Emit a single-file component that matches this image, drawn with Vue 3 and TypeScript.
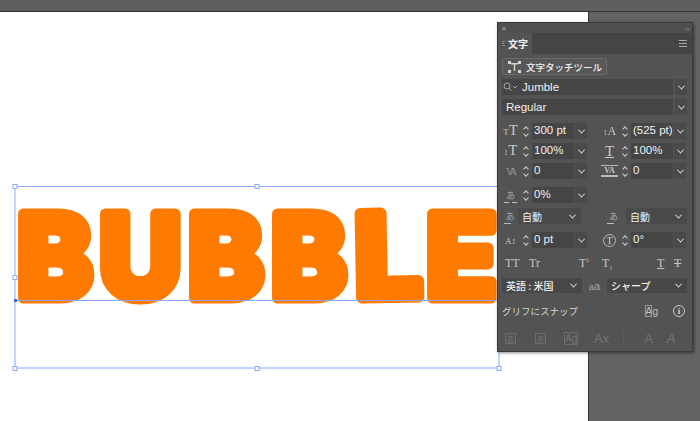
<script setup lang="ts">
const letters = [
  { ch: 'B', x: 17, sx: 0.98, rot: 0 },
  { ch: 'U', x: 99, sx: 0.98, rot: 0 },
  { ch: 'B', x: 188, sx: 0.98, rot: 0 },
  { ch: 'B', x: 271, sx: 0.98, rot: 0 },
  { ch: 'L', x: 355, sx: 1.03, rot: -1 },
  { ch: 'E', x: 426, sx: 1, rot: 0 },
]
const handles = [
  [15, 186], [15, 277], [15, 368], [257, 186], [257, 368], [499, 368],
]
</script>

<template>
  <div class="screen">
    <div class="topbar"></div>
    <div class="workspace">
      <div class="artboard">
        <svg class="art" viewBox="0 12 588 409" width="588" height="409">
          <g fill="#ff7a00" stroke="#ff7a00" stroke-width="11" stroke-linejoin="round">
            <text
              v-for="(l, i) in letters"
              :key="i"
              class="bubble"
              :transform="`translate(${l.x} 298) rotate(${l.rot}) scale(${l.sx} 1)`"
            >{{ l.ch }}</text>
          </g>
          <g fill="none" stroke="#8ba6ff" stroke-width="1">
            <rect x="15" y="186.5" width="484" height="181.5" />
            <line x1="15" y1="300.500" x2="499" y2="300.500" />
          </g>
          <rect x="14" y="299" width="3" height="3" fill="#3d5fe0" />
          <rect
            v-for="(h, i) in handles"
            :key="i"
            :x="h[0] - 2"
            :y="h[1] - 1.5"
            width="4"
            height="4"
            fill="#fff"
            stroke="#8ba6ff"
          />
        </svg>
      </div>
    </div>

    <div class="panel">
      <div class="titlebar">
        <span class="x">✕</span>
        <span class="collapse">››</span>
      </div>
      <div class="tabs">
        <div class="tab"><i class="grip"></i>文字</div>
        <div class="burger"><i></i><i></i><i></i></div>
      </div>

      <div class="body">
        <button class="touch">
          <svg width="13" height="12" viewBox="0 0 13 12">
            <g fill="#d6d6d6">
              <rect x="0" y="0" width="3" height="3" />
              <rect x="10" y="0" width="3" height="3" />
              <rect x="0" y="9" width="3" height="3" />
              <rect x="10" y="9" width="3" height="3" />
              <path d="M3 2h7v1.500H7.200V10H5.800V3.500H3z" />
            </g>
          </svg>
          文字タッチツール
        </button>

        <div class="wide">
          <div class="field grow">
            <svg class="search" width="15" height="10" viewBox="0 0 15 10">
              <g fill="none" stroke="#a8a8a8">
                <circle cx="4" cy="4" r="3" />
                <path d="M6 6l2.500 3M10 4l2 2 2-2" />
              </g>
            </svg>
            Jumble
          </div>
          <div class="drop"><i class="chev"></i></div>
        </div>
        <div class="wide">
          <div class="field grow pad">Regular</div>
          <div class="drop"><i class="chev"></i></div>
        </div>

        <div class="grid first">
          <div class="ctl">
            <span class="ico serif big"><small>T</small>T</span>
            <span class="spin"><i></i><i></i></span>
            <span class="val">300 pt</span><span class="dd"><i class="chev"></i></span>
          </div>
          <div class="ctl">
            <span class="ico serif stack"><small>↕</small>A</span>
            <span class="spin"><i></i><i></i></span>
            <span class="val">(525 pt)</span><span class="dd"><i class="chev"></i></span>
          </div>
          <div class="ctl">
            <span class="ico serif big"><small>↕</small>T</span>
            <span class="spin"><i></i><i></i></span>
            <span class="val">100%</span><span class="dd"><i class="chev"></i></span>
          </div>
          <div class="ctl">
            <span class="ico serif big under">T</span>
            <span class="spin"><i></i><i></i></span>
            <span class="val">100%</span><span class="dd"><i class="chev"></i></span>
          </div>
          <div class="ctl">
            <span class="ico serif va dim">VA</span>
            <span class="spin"><i></i><i></i></span>
            <span class="val">0</span><span class="dd"><i class="chev"></i></span>
          </div>
          <div class="ctl">
            <span class="ico serif va boxed">VA</span>
            <span class="spin"><i></i><i></i></span>
            <span class="val">0</span><span class="dd"><i class="chev"></i></span>
          </div>
        </div>

        <div class="grid tsume">
          <div class="ctl">
            <span class="ico kana">あ
              <svg class="arrow" width="13" height="3" viewBox="0 0 13 3"><path d="M0 1.500h5M8 1.500h5" stroke="#bbb" /></svg>
            </span>
            <span class="spin"><i></i><i></i></span>
            <span class="val">0%</span><span class="dd"><i class="chev"></i></span>
          </div>
        </div>

        <div class="grid auto">
          <div class="sel left">
            <span class="ico kana">あ
              <svg class="arrow" width="11" height="3" viewBox="0 0 11 3"><path d="M0 1.500h7" stroke="#bbb" /></svg>
            </span>
            <span class="auto-box">自動<i class="chev"></i></span>
          </div>
          <div class="sel right">
            <span class="ico kana">あ
              <svg class="arrow" width="11" height="3" viewBox="0 0 11 3"><path d="M4 1.500h7" stroke="#bbb" /></svg>
            </span>
            <span class="auto-box">自動<i class="chev"></i></span>
          </div>
        </div>

        <div class="grid shift">
          <div class="ctl">
            <span class="ico serif big shift-ico"><small class="dim-s">A</small><small>↕</small></span>
            <span class="spin"><i></i><i></i></span>
            <span class="val">0 pt</span><span class="dd"><i class="chev"></i></span>
          </div>
          <div class="ctl">
            <span class="ico serif ring">T</span>
            <span class="spin"><i></i><i></i></span>
            <span class="val">0°</span><span class="dd"><i class="chev"></i></span>
          </div>
        </div>

        <div class="caps serif">
          <span>TT</span>
          <span>Tr</span>
          <span>T<sup>1</sup></span>
          <span>T<sub>1</sub></span>
          <span class="ul">T</span>
          <span class="st">T</span>
        </div>

        <div class="lang">
          <span class="lang-box">英語 : 米国<i class="chev"></i></span>
          <span class="aa">a<small>a</small></span>
          <span class="lang-box">シャープ<i class="chev"></i></span>
        </div>

        <div class="snap">
          <span class="snap-label">グリフにスナップ</span>
          <span class="ag"><b>A</b>g</span>
          <span class="info">i</span>
        </div>

        <div class="disabled">
          <span class="d-box b1">あ</span>
          <span class="d-box b2">あ</span>
          <span class="d-box b3">Ag</span>
          <span class="d-plain p1">Ax</span>
          <span class="sep"></span>
          <span class="d-plain p2">A</span>
          <span class="d-plain p3">A</span>
        </div>
      </div>
    </div>
  </div>
</template>

<style scoped>
.screen {
  position: relative;
  width: 700px;
  height: 421px;
  overflow: hidden;
  background: #636363;
  font-family: "Noto Sans CJK JP", "Liberation Sans", sans-serif;
}
.topbar {
  height: 11px;
  background: #5f5f5f;
  border-bottom: 1px solid #333;
}
.workspace {
  display: flex;
  height: 409px;
}
.artboard {
  width: 588px;
  height: 409px;
  background: #fff;
  border-right: 1px solid #333;
}
.art {
  display: block;
}
.bubble {
  font-family: Inter, "Liberation Sans", sans-serif;
  font-weight: 800;
  font-size: 116px;
}

.panel {
  position: absolute;
  left: 497px;
  top: 22px;
  width: 196px;
  height: 330px;
  background: #535353;
  border: 1px solid #3a3a3a;
  box-sizing: border-box;
  box-shadow: 1px 1px 3px rgba(0, 0, 0, 0.45);
  color: #f0f0f0;
  font-size: 11px;
}
.titlebar {
  height: 10px;
  display: flex;
  justify-content: space-between;
  align-items: center;
  padding: 0 3px;
  background: #4f4f4f;
  color: #a5a5a5;
  font-size: 7px;
  line-height: 10px;
}
.tabs {
  display: flex;
  justify-content: space-between;
  height: 21px;
  background: #454545;
}
.tab {
  width: 34px;
  display: flex;
  align-items: center;
  gap: 4px;
  padding-left: 4px;
  box-sizing: border-box;
  background: #535353;
  font-size: 10px;
  font-weight: 700;
}
.grip {
  width: 2px;
  height: 5px;
  border: 1px dotted #888;
  box-sizing: border-box;
}
.burger {
  display: flex;
  flex-direction: column;
  justify-content: center;
  gap: 2px;
  padding-right: 5px;
}
.burger i {
  display: block;
  width: 8px;
  height: 1px;
  background: #aaa;
}
.body {
  padding: 4px 5px 0 4px;
}
.touch {
  display: flex;
  align-items: center;
  gap: 5px;
  width: 105px;
  height: 17px;
  padding: 0 0 0 5px;
  margin: 0;
  background: #585858;
  border: 1px solid #6b6b6b;
  border-radius: 2px;
  color: #f0f0f0;
  font: inherit;
  font-size: 9.500px;
  font-weight: 500;
  white-space: nowrap;
  box-sizing: border-box;
}
.wide {
  display: flex;
  gap: 2px;
  height: 16px;
  margin-top: 4px;
}
.field {
  display: flex;
  align-items: center;
  background: #454545;
  font-family: "Liberation Sans", sans-serif;
  font-size: 11.500px;
}
.grow {
  flex: 1;
}
.pad {
  padding-left: 4px;
}
.search {
  margin: 0 4px 0 1px;
}
.drop {
  width: 12px;
  display: flex;
  align-items: center;
  justify-content: center;
  background: #4a4a4a;
}
.chev {
  display: inline-block;
  width: 4px;
  height: 4px;
  border-right: 1px solid #ddd;
  border-bottom: 1px solid #ddd;
  transform: rotate(45deg) translate(-1px, -1px);
}
.grid {
  display: grid;
  grid-template-columns: 99px 86px;
}
.first {
  margin-top: 8px;
  row-gap: 4px;
}
.tsume {
  margin-top: 8px;
}
.auto {
  margin-top: 5px;
}
.shift {
  margin-top: 8px;
}
.ctl {
  display: flex;
  align-items: center;
  height: 16px;
}
.ico {
  position: relative;
  width: 17px;
  flex: none;
  text-align: center;
  color: #c8c8c8;
  white-space: nowrap;
}
.serif {
  font-family: "Liberation Serif", serif;
}
.big {
  font-size: 15px;
  line-height: 16px;
}
.big small {
  font-size: 9px;
}
.stack {
  font-size: 12px;
}
.stack small {
  font-size: 9px;
}
.under {
  text-decoration: underline;
  text-underline-offset: 1px;
}
.va {
  font-size: 10px;
  letter-spacing: -2px;
}
.dim {
  color: #9a9a9a;
}
.boxed {
  letter-spacing: 0;
  font-weight: 700;
  font-size: 8px;
  border-top: 1px solid #bbb;
  border-bottom: 2px solid #bbb;
  line-height: 9px;
}
.kana {
  font-size: 9px;
  line-height: 11px;
  color: #a8a8a8;
}
.arrow {
  position: absolute;
  left: 2px;
  bottom: -3px;
}
.ring {
  width: 13px;
  height: 13px;
  margin: 0 2px;
  border: 1px solid #bbb;
  border-radius: 50%;
  box-sizing: border-box;
  font-size: 10px;
  line-height: 11px;
}
.spin {
  width: 13px;
  flex: none;
  display: flex;
  flex-direction: column;
  align-items: center;
  gap: 1px;
}
.spin i {
  width: 3px;
  height: 3px;
  border-left: 1px solid #ccc;
  border-top: 1px solid #ccc;
  transform: rotate(45deg);
}
.spin i + i {
  transform: rotate(225deg);
}
.val {
  width: 42px;
  height: 16px;
  flex: none;
  padding-left: 2px;
  box-sizing: border-box;
  background: #454545;
  font-family: "Liberation Sans", sans-serif;
  font-size: 11.500px;
  line-height: 15px;
  white-space: nowrap;
}
.dd {
  width: 12px;
  height: 16px;
  flex: none;
  margin-left: 1px;
  display: flex;
  align-items: center;
  justify-content: center;
  background: #4a4a4a;
}
.sel {
  display: flex;
  align-items: center;
  height: 16px;
}
.left .ico {
  width: 16px;
}
.left .auto-box {
  width: 63px;
}
.right .ico {
  width: 25px;
}
.right .auto-box {
  width: 61px;
}
.auto-box {
  display: flex;
  align-items: center;
  justify-content: space-between;
  height: 16px;
  padding: 0 6px 0 4px;
  box-sizing: border-box;
  background: #4a4a4a;
  font-size: 10px;
}
.caps {
  display: grid;
  grid-template-columns: 24px 50px 23px 55px 17px 12px;
  height: 16px;
  margin-top: 7px;
  padding-left: 3px;
  font-size: 12px;
  line-height: 16px;
  color: #c4c4c4;
}
.caps sup,
.caps sub {
  font-size: 6px;
  line-height: 0;
}
.ul {
  text-decoration: underline;
}
.st {
  text-decoration: line-through;
}
.lang {
  display: flex;
  align-items: center;
  gap: 0;
  height: 15px;
  margin-top: 7px;
}
.lang-box {
  display: flex;
  align-items: center;
  justify-content: space-between;
  width: 80px;
  height: 15px;
  padding: 0 6px 0 4px;
  box-sizing: border-box;
  background: #474747;
  font-size: 10px;
  font-weight: 500;
}
.aa {
  width: 25px;
  text-align: center;
  color: #a8a8a8;
  font-family: "Liberation Sans", sans-serif;
  font-size: 9px;
}
.aa small {
  font-size: 11px;
}
.snap {
  display: flex;
  align-items: center;
  height: 16px;
  margin-top: 10px;
  color: #d6d6d6;
  font-size: 9.500px;
}
.snap-label {
  width: 143px;
}
.ag {
  width: 28px;
  font-family: "Liberation Sans", sans-serif;
  font-size: 11px;
  color: #bbb;
}
.ag b {
  font-weight: 400;
  outline: 1px solid #999;
  outline-offset: -1px;
}
.info {
  width: 12px;
  height: 12px;
  border: 1px solid #ccc;
  border-radius: 50%;
  box-sizing: border-box;
  text-align: center;
  font-family: "Liberation Serif", serif;
  font-size: 9px;
  line-height: 10px;
  font-weight: 700;
}
.disabled {
  display: flex;
  align-items: center;
  height: 18px;
  margin-top: 10px;
  padding-left: 3px;
  color: #737373;
  font-size: 8px;
}
.d-box {
  width: 11px;
  height: 11px;
  border: 1px solid #6c6c6c;
  box-sizing: border-box;
  text-align: center;
  line-height: 9px;
}
.b2 {
  margin-left: 19px;
}
.b3 {
  width: 14px;
  height: 13px;
  margin-left: 18px;
  font-family: "Liberation Sans", sans-serif;
  font-size: 10px;
  line-height: 11px;
}
.d-plain {
  font-family: "Liberation Sans", sans-serif;
  font-size: 13px;
}
.p1 {
  margin-left: 16px;
}
.sep {
  width: 1px;
  height: 16px;
  margin: 0 20px 0 14px;
  background: #5c5c5c;
}
.p3 {
  margin-left: 14px;
  font-style: italic;
}
</style>

<style>
html, body {
  margin: 0;
  background: #636363;
}
</style>
